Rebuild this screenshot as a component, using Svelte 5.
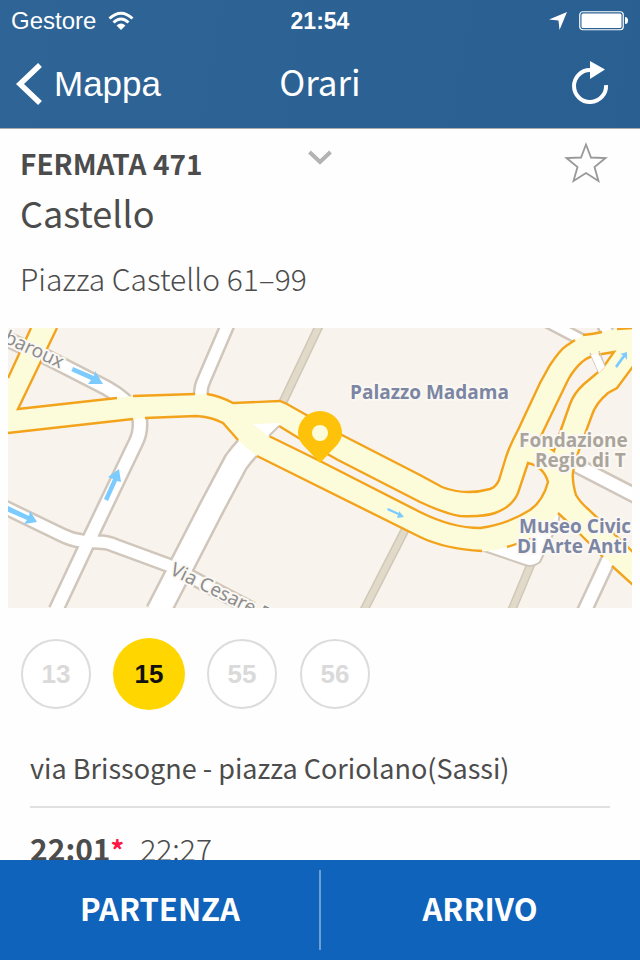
<script>
  const lines = ['13', '15', '55', '56'];
  let selected = $state('15');
  let favourite = $state(false);

  const casing = '#d0c6bb';
  // Minor streets: centre line and inner width
  const streets = [
    { d: 'M4 338 L44 356 L97 383 Q118 393 129 405', w: 12 },
    { d: 'M139 414 Q142 430 136 442 L89 540 L56 610', w: 12 },
    { d: 'M4 507 L62 535 Q72 540 82 541 L98 542 Q108 542 116 546 L168 565 L252 609', w: 11 },
    { d: 'M158 612 L212 507 L236 462 Q246 448 262 434', w: 22 },
    { d: 'M228 324 L204 380 Q200 388 201 398', w: 11 },
    { d: 'M544 320 L582 340', w: 9 },
    { d: 'M600 318 L610 338', w: 10 },
    { d: 'M572 463 L636 496', w: 12 },
    { d: 'M612 552 L584 612', w: 12 }
  ];
  const paths = ['M320 324 L282 404', 'M405 530 L364 610', 'M531 564 L511 612'];

  const median =
    'M279 426 L297 437 L338 460 L420 502 Q446 514 460 516 Q484 517 495 513 Q512 507 518 493 L528 463 Q544 467 548 482 Q543 501 530 510 Q508 524 480 528 Q452 528 420 512 L320 461 L269 436';
  const island =
    'M614 352 L602 354 Q588 356 582 362 Q574 369 568 380 L539 440 L554 451 L558 438 L570 404 Q574 393 584 384 L602 369 Z';
  const edges = [
    'M31 328 L8 378',
    'M57 328 L18 409 L117 398',
    'M133 396 L195 394',
    'M207 394 Q220 396 233 403 L280 401 L287 404 L340 434 L420 475 L442 487 Q465 496 490 489 Q496 487 499 480 L506 457 Q510 445 518 430 L540 383 L550 365 Q560 350 566 346 L575 340',
    'M583 335 Q594 334 602 332',
    'M617 329 L634 328',
    'M8 433 L133 419',
    'M145 418 L196 416 Q212 417 223 423 L238 440',
    'M257 456 L420 537 Q445 549 482 551',
    'M507 547 Q520 543 533 538',
    'M558 513 L571 525 L603 557',
    'M612 566 L634 586',
    'M634 365 L617 388 L608 393 Q596 403 592 415 L578 453 L573 472 Q572 482 576 495 Q580 502 588 509 L634 553'
  ];
</script>

<div class="app">
  <header>
    <div class="status">
      <span class="carrier">
        Gestore
        <svg width="26" height="20" viewBox="0 0 26 20" aria-hidden="true">
          <g fill="none" stroke="#fff" stroke-width="3">
            <path d="M1.500 7.500 Q13 -3 24.500 7.500" />
            <path d="M5.500 11.500 Q13 4.500 20.500 11.500" />
          </g>
          <path d="M8.500 14.500 Q13 10.500 17.500 14.500 L13 19 Z" fill="#fff" />
        </svg>
      </span>
      <span class="clock">21:54</span>
      <span class="indicators">
        <svg width="18" height="18" viewBox="0 0 18 18" aria-hidden="true"><path d="M18 0 L10.500 18 L9.500 8.500 L0 7.500 Z" fill="#fff" /></svg>
        <svg width="50" height="20" viewBox="0 0 50 20" aria-hidden="true">
          <rect x=".75" y=".75" width="43.500" height="18" rx="3" fill="none" stroke="#fff" stroke-width="1.200" />
          <rect x="2.500" y="2.500" width="40" height="14.500" rx="1.500" fill="#fff" />
          <path d="M46 6 Q49 6 49 9.500 Q49 13 46 13 Z" fill="#fff" />
        </svg>
      </span>
    </div>
    <nav>
      <a class="back" href="#mappa">
        <svg width="28" height="42" viewBox="0 0 28 42" aria-hidden="true"><path d="M26 2 L6 21 L26 40" fill="none" stroke="#fff" stroke-width="5.500" /></svg>
        Mappa
      </a>
      <h1>Orari</h1>
      <button class="refresh" aria-label="Aggiorna">
        <svg width="38" height="44" viewBox="0 0 38 44" aria-hidden="true">
          <path d="M18 8 A16 16 0 1 0 34 23" fill="none" stroke="#fff" stroke-width="4" />
          <path d="M18 -1 L33 7.500 L18 17 Z" fill="#fff" />
        </svg>
      </button>
    </nav>
  </header>

  <main>
    <section class="stop">
      <div class="top">
        <h2>FERMATA 471</h2>
        <button class="expand" aria-label="Espandi">
          <svg width="24" height="16" viewBox="0 0 24 16" aria-hidden="true"><path d="M1.500 2 L12 12 L22.500 2" fill="none" stroke="#b3b3b3" stroke-width="4" /></svg>
        </button>
        <button class="star" aria-label="Preferito" aria-pressed={favourite} onclick={() => (favourite = !favourite)}>
          <svg width="42" height="40" viewBox="0 0 42 40" aria-hidden="true">
            <path d="M21 1.500 L26 14.500 L40.500 15 L29.500 24 L33.500 38 L21 30 L8.500 38 L12.500 24 L1.500 15 L16 14.500 Z" fill={favourite ? '#ffd600' : 'none'} stroke="#999" stroke-width="1.800" />
          </svg>
        </button>
      </div>
      <p class="name">Castello</p>
      <p class="address">Piazza Castello 61–99</p>
    </section>

    <svg class="map" viewBox="8 328 624 280" role="img" aria-label="Mappa della fermata">
      <rect x="8" y="328" width="624" height="280" fill="#f8f4ed" />
      <g fill="none">
        {#each paths as d}<path {d} stroke="#cfc8b9" stroke-width="9" />{/each}
        {#each paths as d}<path {d} stroke="#e2dac8" stroke-width="6" />{/each}
        {#each streets as s}<path d={s.d} stroke={casing} stroke-width={s.w + 5} />{/each}
        {#each streets as s}<path d={s.d} stroke="#fff" stroke-width={s.w} />{/each}
      </g>
      <path d="M478 549 L525 565 Q532 568 540 562 L558 524 L561 508 L530 535 Z" fill="#fff" stroke={casing} stroke-width="2" />

      <path
        fill="#fcfbda"
        d="M8 378 L31 328 H57 L18 409 L133 396 L207 394 Q220 396 233 403 L280 401 L287 404 L340 434 L420 475 L442 487 Q465 496 490 489 Q496 487 499 480 L506 457 Q510 445 518 430 L540 383 L550 365 Q560 350 566 346 L583 335 L617 329 H632 V367 L617 388 L608 393 Q596 403 592 415 L578 453 L573 472 Q572 482 576 495 Q580 502 588 509 L632 551 V584 L571 525 L558 513 Q546 533 507 547 Q490 552 482 551 Q445 549 420 537 L257 456 Q246 448 238 440 L223 423 Q212 417 196 416 L145 418 L8 433 Z"
      />
      <path d={median} fill="#f8f4ed" stroke="#f3a31b" stroke-width="2.400" />
      <path d="M253 424 L281 423 L269 437 Z" fill="#fff" />
      <path d="M269 436 L279 426" stroke={casing} stroke-width="2" />
      <path d={island} fill="#f8f4ed" stroke="#f3a31b" stroke-width="2.400" />
      <path d="M590 353 L599 373 M599 351 L605 366" stroke={casing} stroke-width="1.500" />
      <path d="M591 355 L598 353 L605 367 L599 373 Z" fill="#fff" />
      <g fill="none" stroke="#f3a31b" stroke-width="2.400">
        {#each edges as d}<path {d} />{/each}
      </g>

      <g fill="#7bcbff">
        <path d="M72 370 L73 367 L94 376 L95 371 L103 384 L88 384 L91 380 L71 371 Z" />
        <path d="M6 509 L8 506 L29 516 L30 511 L37 522 L24 524 L27 520 L6 511 Z" />
        <path d="M104 499 L113 479 L108 477 L119 469 L121 482 L117 481 L108 501 Z" />
        <path d="M388 508 L399 513 L399 511 L404 517 L397 518 L398 515 L387 510 Z" />
        <path d="M615 366 L623 355 L620 354 L627 352 L627 360 L625 357 L617 368 Z" />
      </g>

      <g class="street-name">
        <text transform="translate(3 342) rotate(25)">baroux</text>
        <text transform="translate(169 574) rotate(26)">Via Cesare B</text>
      </g>
      <g class="place">
        <text x="350" y="399">Palazzo Madama</text>
        <text x="519" y="533">Museo Civic</text>
        <text x="517" y="553">Di Arte Anti</text>
      </g>
      <g class="place muted">
        <text x="519" y="447">Fondazione</text>
        <text x="535" y="467">Regio di T</text>
      </g>

      <path fill="#ffc20a" d="M320 463 L303 445 Q298 439 298 433 A22 22 0 0 1 342 433 Q342 439 337 445 Z" />
      <circle cx="320" cy="433" r="8" fill="#fcfbda" />
    </svg>

    <div class="lines">
      {#each lines as line}
        <button class:active={line === selected} onclick={() => (selected = line)}>{line}</button>
      {/each}
    </div>

    <section class="route">
      <h3>via Brissogne - piazza Coriolano(Sassi)</h3>
      <div class="times"><b>22:01<span>*</span></b><time>22:27</time></div>
    </section>
  </main>

  <footer>
    <button>PARTENZA</button>
    <button>ARRIVO</button>
  </footer>
</div>

<style>
  :global(body) { margin: 0; background: #fefefe; }
  .app {
    height: 100vh;
    display: flex;
    flex-direction: column;
    overflow: hidden;
    font-family: "Noto Sans CJK SC", "Open Sans", sans-serif;
    color: #4c4c4c;
    background: #fefefe;
  }
  h1, h2, h3, p { margin: 0; }
  svg { display: block; overflow: visible; }
  button { margin: 0; padding: 0; border: 0; background: none; font: inherit; color: inherit; cursor: pointer; }

  header {
    flex: none;
    color: #fff;
    background: linear-gradient(100deg, #2e6496, #2a5f92);
    border-bottom: 1px solid #a9abad;
  }
  .status, nav { display: grid; grid-template-columns: 1fr auto 1fr; align-items: center; }
  .status {
    height: 38px;
    padding: 2px 11px 0;
    font: 24px/38px "Liberation Sans", Arial, sans-serif;
  }
  .carrier { display: flex; align-items: center; gap: 12px; }
  .clock { font-size: 23px; font-weight: 700; }
  .indicators { display: flex; align-items: center; justify-content: flex-end; gap: 12px; }
  nav { height: 88px; padding: 0 14px; }
  .back {
    display: flex;
    align-items: center;
    gap: 12px;
    color: #fff;
    text-decoration: none;
    font: 35px/40px "Liberation Sans", Arial, sans-serif;
  }
  h1 { padding-bottom: 6px; font-size: 35px; line-height: 48px; font-weight: 400; }
  .refresh { justify-self: end; margin-right: 16px; }

  main { flex: 1; min-height: 0; overflow: hidden; }
  .stop { padding: 12px 20px 32px; }
  .top { display: grid; grid-template-columns: 1fr auto 1fr; height: 44px; }
  h2 { font-size: 28px; line-height: 44px; font-weight: 700; }
  .expand { align-self: start; padding-top: 9px; }
  .star { justify-self: end; margin-right: 13px; }
  .name { margin-top: 5px; font-size: 36px; line-height: 44px; }
  .address { margin-top: 26px; font-size: 30px; line-height: 36px; font-weight: 300; }

  .map { width: calc(100% - 16px); height: auto; margin: 0 8px; overflow: hidden; }
  .map text { paint-order: stroke; stroke: #fbf8f3; stroke-width: 4px; stroke-linejoin: round; }
  .street-name { font: 19px "Noto Sans", sans-serif; fill: #8d8d8d; }
  .place { font: 700 19px "Open Sans", sans-serif; fill: #7c86a3; }
  .muted { fill: #aaa59b; }

  .lines { display: flex; gap: 21px; padding: 30px 20px 0; }
  .lines button {
    box-sizing: border-box;
    width: 70px;
    height: 70px;
    margin: 1px;
    border: 2px solid #dcdcdc;
    border-radius: 50%;
    color: #dadada;
    background: #fff;
    font: 700 26px/66px "Liberation Sans", Arial, sans-serif;
  }
  .lines .active { width: 72px; height: 72px; margin: 0; border: 0; background: #ffd600; color: #111; }

  .route { padding: 40px 30px 0; }
  h3 { padding-bottom: 20px; border-bottom: 2px solid #e0e0e0; font-size: 27px; line-height: 36px; font-weight: 400; }
  .times { display: flex; gap: 16px; padding-top: 20px; font-size: 30px; line-height: 40px; }
  .times b { font-weight: 700; }
  .times span { font-size: 27px; color: #ff1744; }
  .times time { font-weight: 300; }

  footer { flex: none; display: flex; height: 100px; background: #1063ba; color: #fff; }
  footer button { position: relative; flex: 1; padding-bottom: 4px; font-size: 31px; font-weight: 700; line-height: 96px; }
  footer button + button::before {
    content: "";
    position: absolute;
    left: -1px;
    top: 10px;
    bottom: 10px;
    width: 2px;
    background: #6c9fd6;
  }
</style>
